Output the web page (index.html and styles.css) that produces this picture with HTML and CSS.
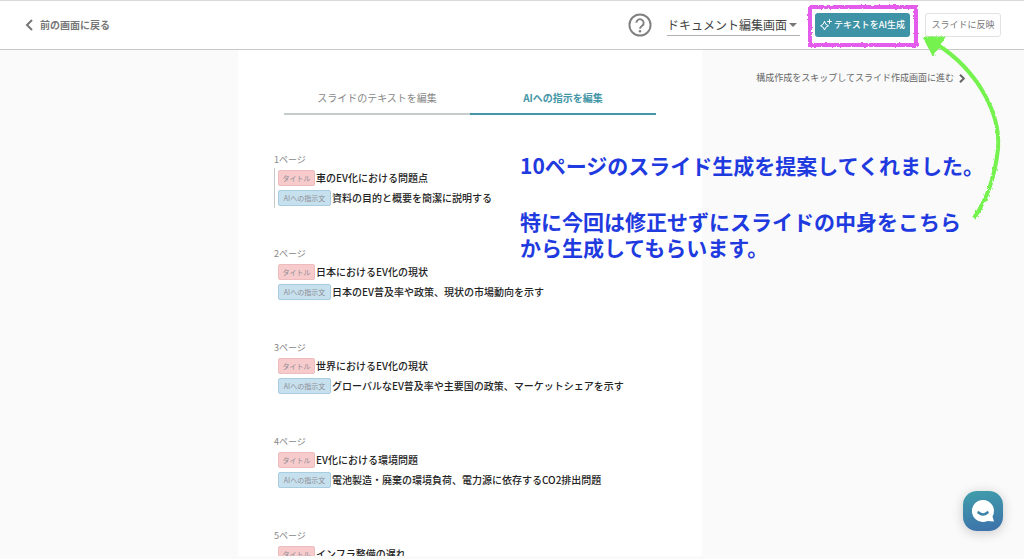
FILE: index.html
```
<!DOCTYPE html>
<html lang="ja">
<head>
<meta charset="utf-8">
<meta name="viewport" content="width=device-width, initial-scale=1">
<title>ドキュメント編集画面</title>
<link rel="stylesheet" href="styles.css">
</head>
<body>
<header class="header">
  <a class="back" href="#">
    <svg width="8" height="12" viewBox="0 0 8 12" fill="none" stroke="currentColor" stroke-width="2"><path d="M7 1 2 6l5 5"/></svg>
    前の画面に戻る
  </a>
  <button class="help" aria-label="ヘルプ">
    <svg width="24" height="24" viewBox="0 0 25 25" fill="none" stroke="currentColor" stroke-width="2"><circle cx="12.500" cy="12.500" r="11"/><path d="M8.700 10.200a3.800 3.800 0 1 1 6.300 2.900c-1.500 1.200-2.500 1.700-2.500 3.400"/><circle cx="12.500" cy="19" r="1.300" fill="currentColor" stroke="none"/></svg>
  </button>
  <div class="mode">
    <select class="mode-select" aria-label="画面の切り替え"><option>ドキュメント編集画面</option></select>
    <svg class="mode-caret" width="8" height="4" viewBox="0 0 8 4"><path d="M0 0h8L4 4z" fill="currentColor"/></svg>
  </div>
  <div class="marked">
    <button class="btn btn-primary">
      <svg width="12" height="12" viewBox="0 0 12 12" fill="none" stroke="currentColor" stroke-linejoin="round" stroke-linecap="round"><path d="M4.500 2.500Q5.200 6 8.500 6.800 5.200 7.600 4.500 11 3.800 7.600.600 6.800 3.800 6 4.500 2.500zM9.500.600v3.800M7.600 2.500h3.800"/></svg>
      テキストをAI生成
    </button>
    <svg class="marker" viewBox="0 0 112 44" aria-hidden="true">
      <defs><filter id="rough" x="-5%" y="-10%" width="110%" height="120%"><feTurbulence type="fractalNoise" baseFrequency="0.35" numOctaves="2" seed="4"/><feDisplacementMap in="SourceGraphic" scale="3"/></filter></defs>
      <rect x="3" y="3" width="106" height="38" fill="none" stroke="#e35cec" stroke-width="4" filter="url(#rough)"/>
    </svg>
  </div>
  <button class="btn btn-outline">スライドに反映</button>
</header>

<main class="main">
  <section class="sheet">
    <div class="tabs" role="tablist">
      <button class="tab" role="tab" aria-selected="false">スライドのテキストを編集</button>
      <button class="tab tab-active" role="tab" aria-selected="true">AIへの指示を編集</button>
    </div>
    <ol class="pages">
      <li class="page">
        <h2 class="page-no">1ページ</h2>
        <div class="page-body page-current">
          <p class="line"><span class="tag tag-title">タイトル</span>車のEV化における問題点</p>
          <p class="line"><span class="tag tag-ai">AIへの指示文</span>資料の目的と概要を簡潔に説明する</p>
        </div>
      </li>
      <li class="page">
        <h2 class="page-no">2ページ</h2>
        <div class="page-body">
          <p class="line"><span class="tag tag-title">タイトル</span>日本におけるEV化の現状</p>
          <p class="line"><span class="tag tag-ai">AIへの指示文</span>日本のEV普及率や政策、現状の市場動向を示す</p>
        </div>
      </li>
      <li class="page">
        <h2 class="page-no">3ページ</h2>
        <div class="page-body">
          <p class="line"><span class="tag tag-title">タイトル</span>世界におけるEV化の現状</p>
          <p class="line"><span class="tag tag-ai">AIへの指示文</span>グローバルなEV普及率や主要国の政策、マーケットシェアを示す</p>
        </div>
      </li>
      <li class="page">
        <h2 class="page-no">4ページ</h2>
        <div class="page-body">
          <p class="line"><span class="tag tag-title">タイトル</span>EV化における環境問題</p>
          <p class="line"><span class="tag tag-ai">AIへの指示文</span>電池製造・廃棄の環境負荷、電力源に依存するCO2排出問題</p>
        </div>
      </li>
      <li class="page">
        <h2 class="page-no">5ページ</h2>
        <div class="page-body">
          <p class="line"><span class="tag tag-title">タイトル</span>インフラ整備の遅れ</p>
        </div>
      </li>
    </ol>
  </section>
  <aside class="side">
    <a class="skip" href="#">構成作成をスキップしてスライド作成画面に進む
      <svg width="6" height="9" viewBox="0 0 6 9" fill="none" stroke="currentColor" stroke-width="2"><path d="M1 .700 4.800 4.500 1 8.300"/></svg>
    </a>
  </aside>
</main>

<div class="notes">
  <p class="note">10ページのスライド生成を提案してくれました。</p>
  <p class="note">特に今回は修正せずにスライドの中身をこちら<br>から生成してもらいます。</p>
</div>
<svg class="arrow" width="90" height="192" viewBox="0 0 90 192" aria-hidden="true">
  <g filter="url(#rough)">
    <path d="M54 187C66 170 75 145 78 118 81 80 55 38 18 14" fill="none" stroke="#76f250" stroke-width="4"/>
    <path d="M3 6 25 6 13 25z" fill="#76f250" stroke="#76f250" stroke-linejoin="round"/>
  </g>
</svg>

<button class="chat" aria-label="チャットを開く">
  <svg width="22" height="22" viewBox="0 0 22 22"><path d="M11 0a11 11 0 0 1 9.500 16.500L22 21.500 15.500 21A11 11 0 1 1 11 0z" fill="#fff"/><path d="M6.500 12.500q4.500 4 9 0" fill="none" stroke="#3e84a8" stroke-width="2.600" stroke-linecap="round"/></svg>
</button>
</body>
</html>
```
FILE: styles.css
```
* { box-sizing: border-box; }
body {
  position: relative;
  display: flex;
  flex-direction: column;
  height: 100vh;
  margin: 0;
  padding-bottom: 3px;
  overflow: hidden;
  background: #fafafa;
  color: #222;
  font: 10px/16px "Noto Sans CJK JP", sans-serif;
}
button, select { font: inherit; }
button { padding: 0; border: 0; background: none; cursor: pointer; }
a { color: inherit; text-decoration: none; }
p, h2, ol { margin: 0; padding: 0; }
svg { display: block; flex: none; }

.header {
  display: flex;
  flex: none;
  align-items: center;
  gap: 15px;
  height: 50px;
  padding: 0 23px 0 25px;
  border-top: 1px solid #d9d9d9;
  border-bottom: 1px solid #c8c8c8;
  background: #fff;
}
.back {
  display: flex;
  align-items: center;
  gap: 7px;
  margin-right: auto;
  color: #777;
  font-weight: 700;
}
.help { color: #808080; }
.mode { position: relative; }
.mode-select {
  width: 133px;
  height: 22px;
  padding: 0;
  border: 0;
  border-bottom: 1px solid #b0b0b0;
  border-radius: 0;
  background: transparent;
  color: #444;
  font-size: 12px;
  appearance: none;
}
.mode-caret { position: absolute; top: 9px; right: 3px; color: #777; }
.marked { position: relative; }
.marker { position: absolute; inset: -9px -9px auto -8px; pointer-events: none; }
.btn {
  display: flex;
  align-items: center;
  justify-content: center;
  height: 24px;
  border-radius: 3px;
  font-size: 9px;
  white-space: nowrap;
}
.btn-primary { gap: 2px; width: 95px; background: #3f93a6; color: #fff; font-weight: 500; }
.btn-outline { width: 76px; border: 1px solid #e2e2e2; background: #fff; color: #777; }

.main {
  display: grid;
  flex: 1;
  grid-template-columns: 238fr 464fr 322fr;
  min-height: 0;
  overflow: hidden;
}
.sheet {
  grid-column: 2;
  padding: 34px 46px 0;
  overflow: hidden;
  background: #fff;
}
.tabs { display: flex; }
.tab {
  flex: 1;
  height: 31px;
  padding-bottom: 1px;
  border-bottom: 2px solid #c4cccc;
  color: #888;
}
.tab-active { border-color: #4596a6; color: #4596a6; font-weight: 700; }
.pages {
  display: grid;
  gap: 38px;
  margin: 37px -36px 0 -10px;
  list-style: none;
}
.page-no { height: 16px; color: #888; font-size: 9px; font-weight: 400; }
.page-body {
  display: grid;
  gap: 4px;
  padding: 2px 0 2px 3px;
  border-left: 1px solid transparent;
}
.page-current { border-color: #c8c8c8; }
.line { display: flex; gap: 1px; font-weight: 500; white-space: nowrap; }
.tag {
  flex: none;
  height: 16px;
  border: 1px solid;
  border-radius: 2px;
  color: #8e8e95;
  font-size: 7px;
  font-weight: 400;
  line-height: 14px;
  text-align: center;
}
.tag-title { width: 37px; border-color: #eebcbe; background: #f7cacb; }
.tag-ai { width: 53px; border-color: #a9cde0; background: #c6e0ee; }

.side { padding: 20px 59px 0 0; }
.skip {
  display: flex;
  align-items: center;
  justify-content: flex-end;
  gap: 5px;
  color: #666;
  font-size: 9px;
  white-space: nowrap;
}

.notes {
  position: absolute;
  top: 152px;
  right: 32px;
  display: grid;
  gap: 30px;
  width: 472px;
  color: #1f3be0;
  font-size: 21px;
  font-weight: 700;
  line-height: 26px;
  white-space: nowrap;
}
.arrow { position: absolute; top: 31px; right: 14px; }

.chat {
  position: absolute;
  right: 21px;
  bottom: 28px;
  display: grid;
  place-items: center;
  width: 40px;
  height: 40px;
  border-radius: 14px;
  background: linear-gradient(170deg, #409eaa, #3c70ab);
  box-shadow: 0 2px 12px rgba(0, 0, 0, 0.2);
}
```
